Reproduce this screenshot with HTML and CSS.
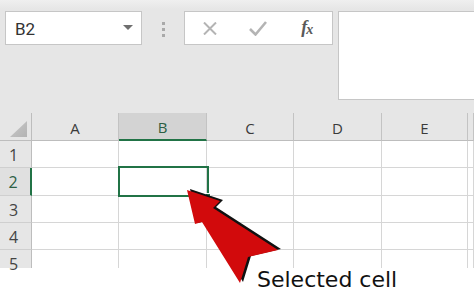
FILE: index.html
```html
<!DOCTYPE html>
<html lang="en">
<head>
<meta charset="utf-8">
<title>Selected cell</title>
<link rel="stylesheet" href="styles.css">
</head>
<body>
<div class="app">
  <div class="fbar">
    <div class="namebox"><span class="ref">B2</span><span class="caret"></span></div>
    <div class="grip"><i></i><i></i><i></i></div>
    <div class="fbtns">
      <span class="fbtn">
        <svg width="14" height="13" viewBox="0 0 14 13"><path d="M1 0.5 L13 12.5 M13 0.5 L1 12.5" stroke="#b4b4b4" stroke-width="2" fill="none"/></svg>
      </span>
      <span class="fbtn">
        <svg width="18" height="15" viewBox="0 0 18 15"><path d="M1 8 L6.5 13.5 L17 1" stroke="#b4b4b4" stroke-width="2.6" fill="none"/></svg>
      </span>
      <span class="fbtn"><span class="fx">f<span class="fx-x">x</span></span></span>
    </div>
    <div class="finput"></div>
  </div>

  <div class="sheet">
    <div class="corner"><span class="corner-tri"></span></div>
    <div class="ch">A</div>
    <div class="ch ch-sel">B</div>
    <div class="ch">C</div>
    <div class="ch">D</div>
    <div class="ch">E</div>
    <div class="ch"></div>

    <div class="rh">1</div>
    <div class="c"></div><div class="c"></div><div class="c"></div><div class="c"></div><div class="c"></div><div class="c"></div>

    <div class="rh rh-sel">2</div>
    <div class="c"></div><div class="c"></div><div class="c"></div><div class="c"></div><div class="c"></div><div class="c"></div>

    <div class="rh">3</div>
    <div class="c"></div><div class="c"></div><div class="c"></div><div class="c"></div><div class="c"></div><div class="c"></div>

    <div class="rh">4</div>
    <div class="c"></div><div class="c"></div><div class="c"></div><div class="c"></div><div class="c"></div><div class="c"></div>

    <div class="rh rh-last">5</div>
    <div class="c c-last"></div><div class="c c-last"></div><div class="c c-last"></div><div class="c c-last"></div><div class="c c-last"></div><div class="c c-last"></div>

    <div class="selection"><span class="handle"></span></div>
  </div>

  <svg class="arrow" width="474" height="295" viewBox="0 0 474 295">
    <polygon points="190,189 223,200 216,207 281,249 251,256 243,282 205,221 198,223" fill="#111"/>
    <polygon points="187,190 220,201 213,208 278,250 248,257 240,283 202,222 195,224" fill="#d20a0c"/>
  </svg>
  <div class="label">Selected cell</div>
</div>
</body>
</html>
```

FILE: styles.css
```css
* { box-sizing: border-box; }

html, body {
  margin: 0;
  padding: 0;
  background: #ffffff;
}

.app {
  position: relative;
  width: 474px;
  height: 295px;
  overflow: hidden;
  font-family: "Open Sans", "Noto Sans", sans-serif;
}

/* ---------- formula bar ---------- */
.fbar {
  display: flex;
  align-items: flex-start;
  height: 113px;
  padding: 11px 0 0 5px;
  background: linear-gradient(#efefef 0, #e6e6e6 9px, #e6e6e6 100%);
}

.namebox {
  display: flex;
  align-items: center;
  justify-content: space-between;
  width: 137px;
  height: 34px;
  padding: 2px 8px 0 9px;
  background: #ffffff;
  border: 1px solid #c6c6c6;
}

.ref {
  font-family: Roboto, "Open Sans", sans-serif;
  font-size: 17px;
  color: #333333;
}

.caret {
  width: 0;
  height: 0;
  margin-top: -3px;
  border-left: 5px solid transparent;
  border-right: 5px solid transparent;
  border-top: 5px solid #6f6f6f;
}

.grip {
  display: flex;
  flex-direction: column;
  align-items: center;
  gap: 3px;
  width: 42px;
  padding-top: 11px;
  padding-left: 1px;
}

.grip i {
  display: block;
  width: 3px;
  height: 3px;
  background: #a9a9a9;
}

.fbtns {
  display: flex;
  width: 149px;
  height: 34px;
  padding: 0 1px;
  background: #ffffff;
  border: 1px solid #c6c6c6;
}

.fbtn {
  display: flex;
  align-items: center;
  justify-content: center;
  width: 49px;
  height: 100%;
}

.fbtn svg { display: block; }

.fx {
  font-family: "Liberation Serif", serif;
  font-style: italic;
  font-weight: bold;
  font-size: 18px;
  color: #5a5a5a;
  letter-spacing: -1px;
  margin-top: -2px;
}

.fx-x {
  font-size: 14px;
  position: relative;
  top: 1px;
}

.finput {
  flex: 1;
  height: 89px;
  margin-left: 5px;
  margin-right: -4px;
  background: #ffffff;
  border: 1px solid #c6c6c6;
}

/* ---------- grid ---------- */
.sheet {
  position: relative;
  display: grid;
  grid-template-columns: 32px 87px 88px 87px 88px 86px 1fr;
  grid-template-rows: 28px 27px 28px 27px 27px 18px;
  background: #ffffff;
}

.corner {
  position: relative;
  background: #e6e6e6;
  border-right: 1px solid #bdbdbd;
  border-bottom: 1px solid #bdbdbd;
}

.corner-tri {
  position: absolute;
  left: 10px;
  top: 8px;
  width: 17px;
  height: 16px;
  background: linear-gradient(135deg, #c9c9c9, #b3b3b3);
  clip-path: polygon(100% 0, 100% 100%, 0 100%);
}

.ch {
  display: flex;
  align-items: center;
  justify-content: center;
  padding-top: 2px;
  background: #e6e6e6;
  border-right: 1px solid #c3c3c3;
  border-bottom: 1px solid #bdbdbd;
  font-size: 15px;
  color: #3a3a3a;
}

.ch-sel {
  background: #d3d3d3;
  border-bottom: 2px solid #217346;
  color: #2d5f44;
}

.rh {
  display: flex;
  align-items: center;
  justify-content: center;
  padding-right: 4px;
  padding-top: 1px;
  background: #e6e6e6;
  border-right: 1px solid #bdbdbd;
  border-bottom: 1px solid #cfcfcf;
  font-size: 16px;
  color: #444444;
}

.rh-sel {
  background: #e0e0e0;
  border-right: 2px solid #217346;
  color: #2d5f44;
}

.rh-last {
  align-items: flex-start;
  padding-top: 3px;
  border-bottom: 0;
}

.c {
  border-right: 1px solid #d6d6d6;
  border-bottom: 1px solid #d6d6d6;
}

.c-last { border-bottom: 0; }

.selection {
  position: absolute;
  left: 118px;
  top: 53px;
  width: 91px;
  height: 31px;
  border: 2px solid #217346;
}

.handle {
  position: absolute;
  right: -4px;
  bottom: -4px;
  width: 6px;
  height: 6px;
  background: #217346;
  border: 1px solid #ffffff;
}

/* ---------- annotation ---------- */
.arrow {
  position: absolute;
  left: 0;
  top: 0;
  pointer-events: none;
}

.label {
  position: absolute;
  left: 257px;
  top: 267px;
  font-family: "DejaVu Sans", Verdana, sans-serif;
  font-size: 22px;
  line-height: normal;
  color: #111111;
  white-space: nowrap;
}
```
